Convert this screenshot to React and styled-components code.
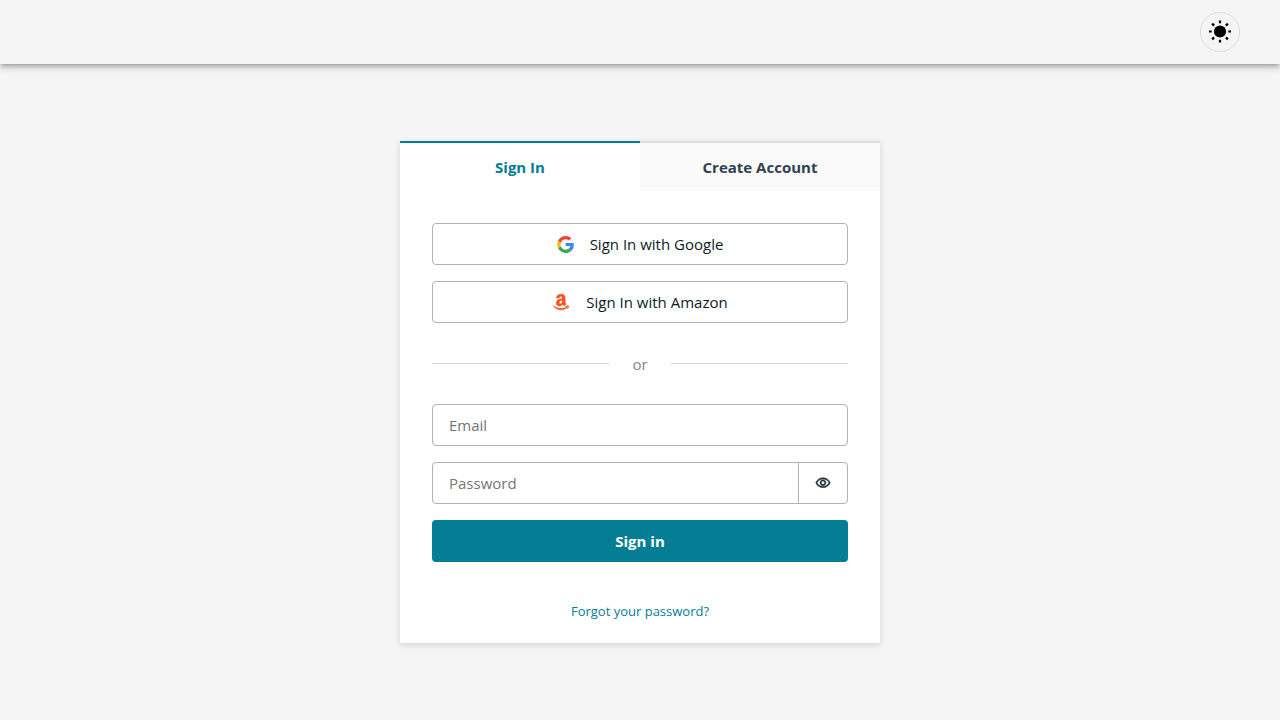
import React, { useState } from 'react'
import styled, { createGlobalStyle } from 'styled-components'
import { FaAmazon } from 'react-icons/fa'
import { MdOutlineVisibility } from 'react-icons/md'

const GlobalStyle = createGlobalStyle`
  * {
    box-sizing: border-box;
  }
  body {
    margin: 0;
    background: #f5f5f5;
    font-family: "Segoe UI", "Open Sans", "Noto Sans", sans-serif;
    font-size: 15px;
  }
  button, input {
    font: inherit;
  }
`

const Page = styled.div`
  min-height: 100vh;
  display: flex;
  flex-direction: column;
`

const Header = styled.header`
  height: 64px;
  padding: 0 40px;
  display: flex;
  align-items: center;
  justify-content: flex-end;
  background: #f5f5f5;
  box-shadow: 0 2px 4px -1px rgba(0, 0, 0, 0.2), 0 4px 5px rgba(0, 0, 0, 0.14),
    0 1px 10px rgba(0, 0, 0, 0.12);
`

const ThemeButton = styled.button`
  width: 40px;
  height: 40px;
  padding: 0;
  display: flex;
  align-items: center;
  justify-content: center;
  background: transparent;
  border: 1px solid #dedede;
  border-radius: 50%;
  cursor: pointer;
`

const Main = styled.main`
  flex: 1;
  display: flex;
  align-items: center;
  justify-content: center;
`

const Card = styled.div`
  width: 100%;
  max-width: 480px;
  background: #fff;
  box-shadow: 0 2px 6px rgba(13, 26, 38, 0.15);
`

const Tabs = styled.div`
  display: flex;
`

const Tab = styled.button`
  flex: 1;
  height: 50px;
  padding: 0;
  border: 0;
  border-top: 2px solid ${(props) => (props.$active ? '#047d95' : '#dcdee0')};
  background: ${(props) => (props.$active ? '#fff' : '#fafafa')};
  color: ${(props) => (props.$active ? '#047d95' : '#304050')};
  font-weight: 700;
  cursor: pointer;
`

const Form = styled.form`
  padding: 32px 32px 20px;
  display: flex;
  flex-direction: column;
  gap: 16px;
`

const SocialButton = styled.button`
  height: 42px;
  padding: 0;
  display: flex;
  align-items: center;
  justify-content: center;
  gap: 16px;
  background: #fff;
  border: 1px solid #aeb3b7;
  border-radius: 4px;
  color: #0d1a26;
  cursor: pointer;
`

const AmazonIcon = styled(FaAmazon)`
  width: 18px;
  height: 18px;
  color: #f5521f;
  stroke: #f5521f;
  stroke-width: 16px;
`

const Divider = styled.div`
  height: 49px;
  display: flex;
  align-items: center;
  gap: 23px;
  color: #7f8790;
  line-height: 20px;

  &::before,
  &::after {
    content: "";
    flex: 1;
    height: 1px;
    background: #d0d3d6;
  }
`

const Field = styled.div`
  height: 42px;
  display: flex;
  border: 1px solid #aeb3b7;
  border-radius: 4px;
  overflow: hidden;
`

const Input = styled.input`
  flex: 1;
  min-width: 0;
  padding: 0 16px;
  border: 0;
  outline: 0;
  background: transparent;
  color: #0d1a26;

  &::placeholder {
    color: #757575;
  }
`

const ShowButton = styled.button`
  width: 49px;
  padding: 0;
  display: flex;
  align-items: center;
  justify-content: center;
  background: transparent;
  border: 0;
  border-left: 1px solid #aeb3b7;
  color: #1f2d3a;
  cursor: pointer;
`

const EyeIcon = styled(MdOutlineVisibility)`
  width: 16px;
  height: 16px;

  path:last-child {
    stroke: currentColor;
    stroke-width: 0.6px;
  }
`

const SubmitButton = styled.button`
  height: 42px;
  padding: 0;
  border: 0;
  border-radius: 4px;
  background: #047d95;
  color: #fff;
  font-weight: 700;
  cursor: pointer;
`

const Footer = styled.div`
  padding-top: 22px;
  display: flex;
  justify-content: center;
`

const ForgotLink = styled.a`
  color: #047d95;
  font-size: 13px;
  line-height: 23px;
  text-decoration: none;
`

const SunIcon = () => (
  <svg width="24" height="24" viewBox="0 0 24 24" aria-hidden="true">
    <circle cx="12" cy="11.5" r="6.1" />
    <g stroke="#000" strokeWidth="2.2">
      <path d="M12 .5v2.7M12 19.8v2.7M1 11.5h2.7M20.3 11.5H23" />
      <path d="M4.1 3.6l2 2M17.9 17.4l2 2M4.1 19.4l2-2M17.9 5.6l2-2" />
    </g>
  </svg>
)

const GoogleIcon = () => (
  <svg width="17" height="17" viewBox="0 0 256 262" aria-hidden="true">
    <path
      fill="#4285F4"
      d="M255.878 133.451c0-10.734-.871-18.567-2.756-26.69H130.55v48.448h71.947c-1.45 12.04-9.283 30.172-26.69 42.356l-.244 1.622 38.755 30.023 2.685.268c24.659-22.774 38.875-56.282 38.875-96.027"
    />
    <path
      fill="#34A853"
      d="M130.55 261.1c35.248 0 64.839-11.605 86.453-31.622l-41.196-31.913c-11.024 7.688-25.82 13.055-45.257 13.055-34.523 0-63.824-22.773-74.269-54.25l-1.531.13-40.298 31.187-.527 1.465C35.393 231.798 79.49 261.1 130.55 261.1"
    />
    <path
      fill="#FBBC05"
      d="M56.281 156.37c-2.756-8.123-4.351-16.827-4.351-25.82 0-8.994 1.595-17.697 4.206-25.82l-.073-1.73L15.26 71.312l-1.335.635C5.077 89.644 0 109.517 0 130.55s5.077 40.905 13.925 58.602l42.356-32.782"
    />
    <path
      fill="#EB4335"
      d="M130.55 50.479c24.514 0 41.05 10.589 50.479 19.438l36.844-35.974C195.245 12.91 165.798 0 130.55 0 79.49 0 35.393 29.301 13.925 71.947l42.211 32.783c10.59-31.477 39.891-54.251 74.414-54.251"
    />
  </svg>
)

const App = () => {
  const [tab, setTab] = useState('signin')
  const [show, setShow] = useState(false)

  return (
    <>
      <GlobalStyle />
      <Page>
        <Header>
          <ThemeButton type="button" aria-label="Toggle theme">
            <SunIcon />
          </ThemeButton>
        </Header>
        <Main>
          <Card>
            <Tabs role="tablist">
              <Tab type="button" role="tab" aria-selected={tab === 'signin'} $active={tab === 'signin'} onClick={() => setTab('signin')}>
                Sign In
              </Tab>
              <Tab type="button" role="tab" aria-selected={tab === 'create'} $active={tab === 'create'} onClick={() => setTab('create')}>
                Create Account
              </Tab>
            </Tabs>
            <Form onSubmit={(e) => e.preventDefault()}>
              <SocialButton type="button">
                <GoogleIcon />
                Sign In with Google
              </SocialButton>
              <SocialButton type="button">
                <AmazonIcon />
                Sign In with Amazon
              </SocialButton>
              <Divider>or</Divider>
              <Field>
                <Input type="email" aria-label="Email" placeholder="Email" />
              </Field>
              <Field>
                <Input type={show ? 'text' : 'password'} aria-label="Password" placeholder="Password" />
                <ShowButton type="button" aria-label="Show password" onClick={() => setShow(!show)}>
                  <EyeIcon />
                </ShowButton>
              </Field>
              <SubmitButton type="submit">Sign in</SubmitButton>
              <Footer>
                <ForgotLink href="#">Forgot your password?</ForgotLink>
              </Footer>
            </Form>
          </Card>
        </Main>
      </Page>
    </>
  )
}

export default App
